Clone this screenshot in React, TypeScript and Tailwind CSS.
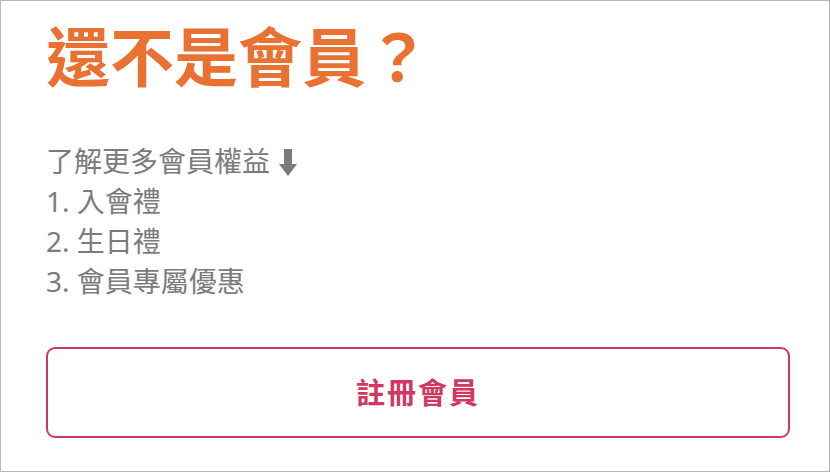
const CJK = "font-['Noto_Sans','Noto_Sans_CJK_TC',sans-serif]";

const perks = ["1. 入會禮", "2. 生日禮", "3. 會員專屬優惠"];

function DownArrow() {
  return (
    <svg
      viewBox="0 0 18 27"
      className="ml-[9px] inline-block h-[27px] w-[18px] align-[-4px]"
      aria-hidden
    >
      <path d="M5 0h8v15h5l-9 12-9-12h5z" fill="#7b7b7b" />
    </svg>
  );
}

export default function App() {
  return (
    <div className={`h-[472px] w-[830px] border border-[#b8b8b8] bg-white ${CJK}`}>
      <div className="px-[45px] pt-[24px]">
        <h1 className="text-[64px] font-bold leading-none text-[#e97131]">
          還不是會員？
        </h1>

        <div className="mt-[52px] text-[28px] leading-[40px] text-[#7b7b7b]">
          <p>
            了解更多會員權益
            <DownArrow />
          </p>
          {perks.map((item) => (
            <p key={item}>{item}</p>
          ))}
        </div>

        <button
          type="button"
          className="mt-[46px] flex h-[91px] w-[744px] items-center justify-center rounded-[9px] border-2 border-[#d0385f] text-[29px] font-bold tracking-[2px] text-[#d0385f]"
        >
          註冊會員
        </button>
      </div>
    </div>
  );
}
